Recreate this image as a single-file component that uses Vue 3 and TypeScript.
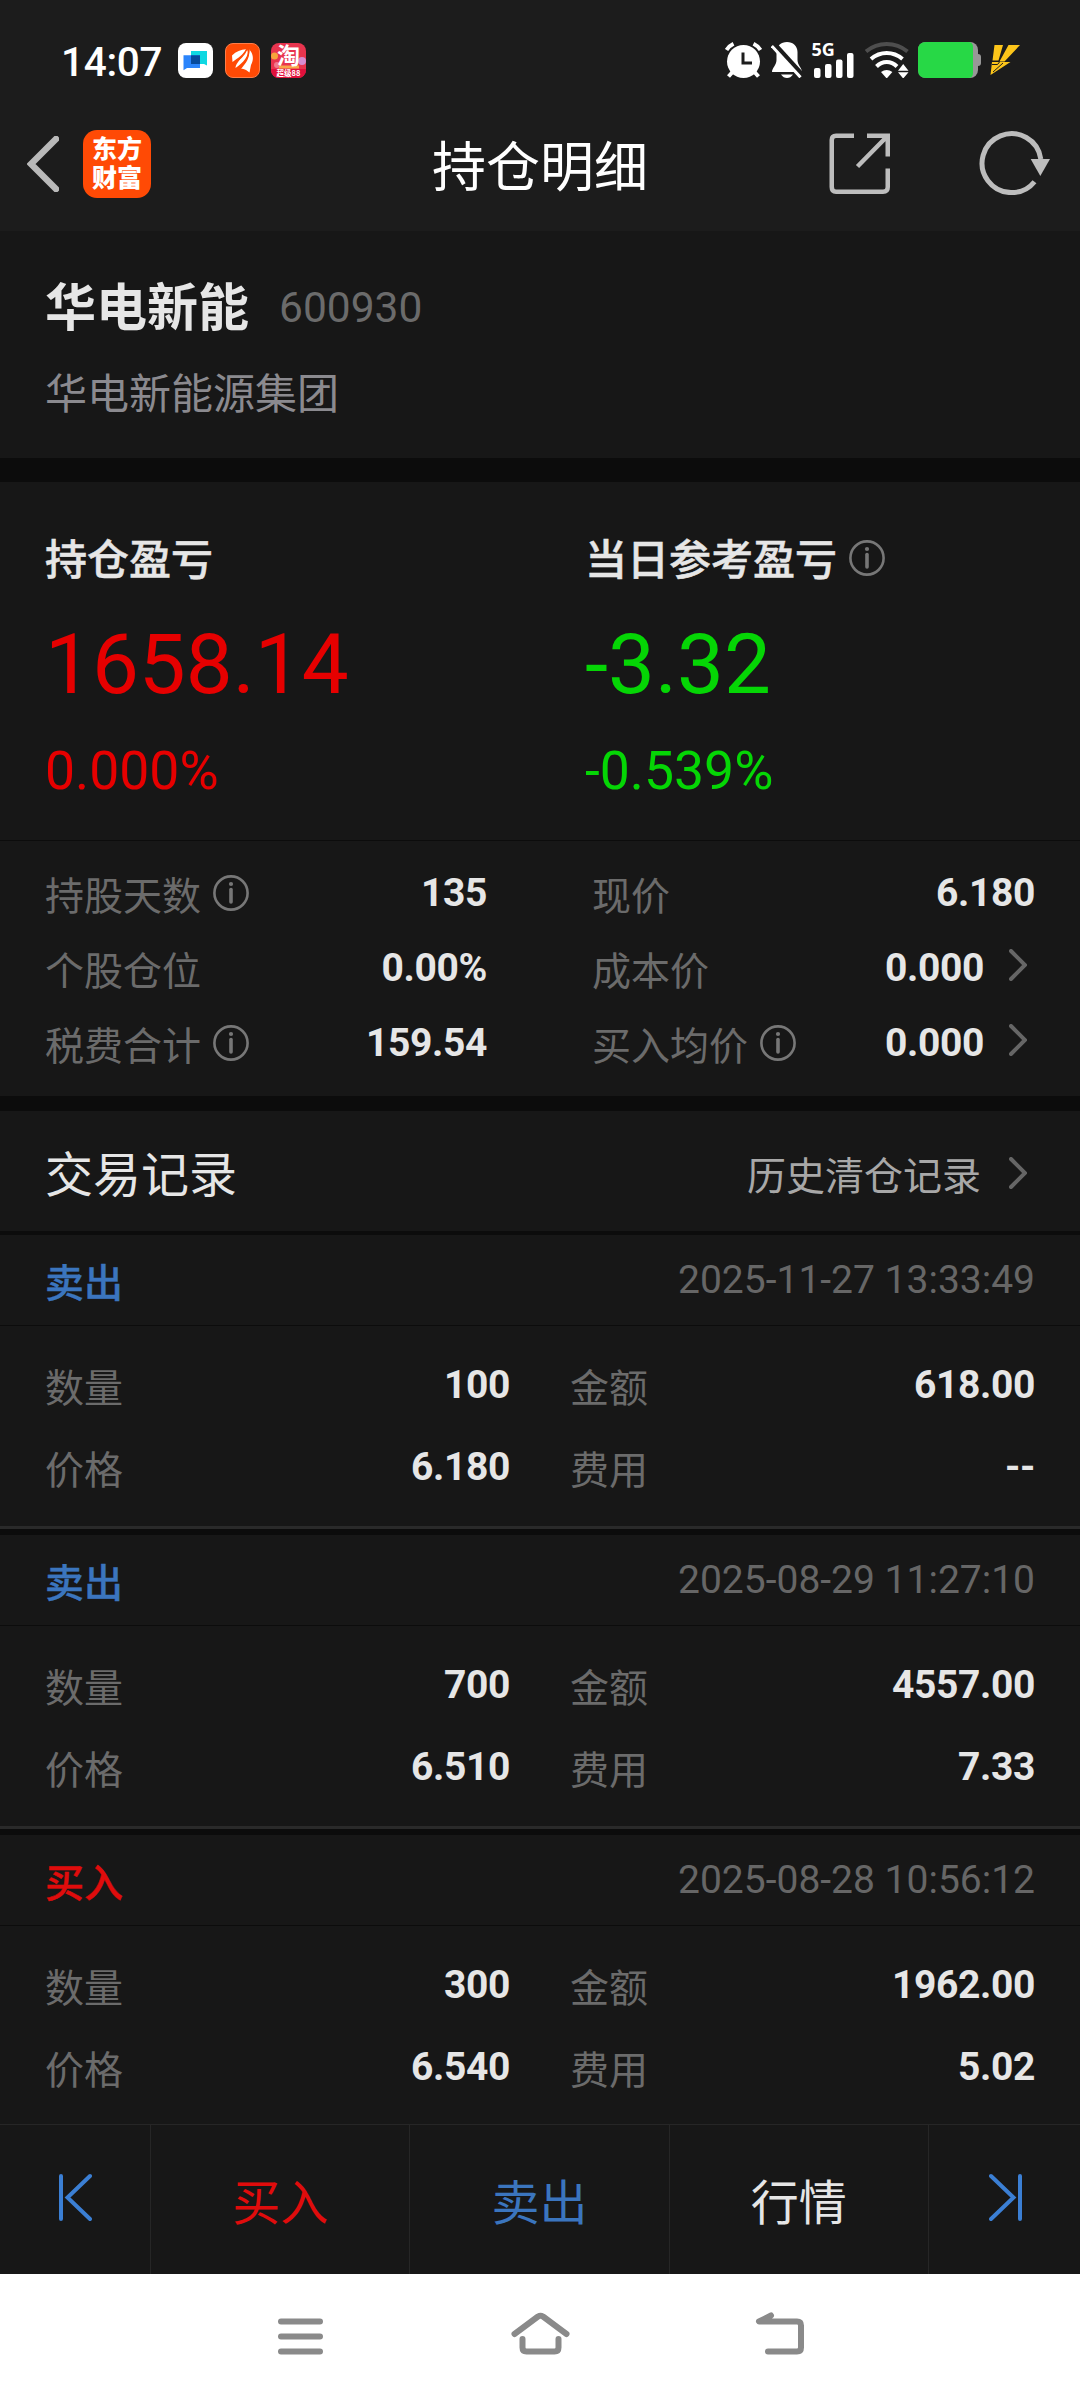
<script setup lang="ts">
interface Metric {
  label: string
  value: string
  info?: boolean
  link?: boolean
}

interface Trade {
  side: 'buy' | 'sell'
  time: string
  quantity: string
  amount: string
  price: string
  fee: string
}

const metrics: Metric[] = [
  { label: '持股天数', value: '135', info: true },
  { label: '现价', value: '6.180' },
  { label: '个股仓位', value: '0.00%' },
  { label: '成本价', value: '0.000', link: true },
  { label: '税费合计', value: '159.54', info: true },
  { label: '买入均价', value: '0.000', info: true, link: true },
]

const trades: Trade[] = [
  { side: 'sell', time: '2025-11-27 13:33:49', quantity: '100', amount: '618.00', price: '6.180', fee: '--' },
  { side: 'sell', time: '2025-08-29 11:27:10', quantity: '700', amount: '4557.00', price: '6.510', fee: '7.33' },
  { side: 'buy', time: '2025-08-28 10:56:12', quantity: '300', amount: '1962.00', price: '6.540', fee: '5.02' },
]

function cells(t: Trade): [string, string][] {
  return [
    ['数量', t.quantity],
    ['金额', t.amount],
    ['价格', t.price],
    ['费用', t.fee],
  ]
}
</script>

<template>
  <div class="screen">
    <header class="top">
      <div class="status">
        <span class="clock">14:07</span>
        <div class="apps">
          <svg width="35" height="35" viewBox="0 0 35 35">
            <rect width="35" height="35" rx="8" fill="#fff" />
            <path d="M13 8H29v14.500l-3-1.500H13z" fill="#0fd8e2" />
            <path d="M5.500 12.300H22V25H9l-3.500 2.300z" fill="#2a84fb" />
            <rect x="13" y="12.300" width="9" height="8.700" fill="#064a9c" />
          </svg>
          <svg width="35" height="35" viewBox="0 0 35 35">
            <rect x=".5" y=".5" width="34" height="34" rx="7.500" fill="#ff4a05" stroke="#ff7d48" />
            <path d="M7 12.500C11 8.500 16 6.500 21 6.300C18 12 13 15 7.500 19z" fill="#fff" />
            <path d="M10.500 25C10.500 20 18 14 22 6.500C25 12 18 20 10.500 25z" fill="#fff" />
            <path d="M16 26C21 20 25 15 24.300 6.500C28.500 11 29 17 26 22L24.500 29.500C22 28 19 25 16 26z" fill="#fff" />
            <path d="M8 21C15 16 19 13 21.800 6.500M13.500 26C19.500 20 24 15 24 7" stroke="#ff4a05" stroke-width="1.200" fill="none" />
          </svg>
          <svg class="shop" width="35" height="35" viewBox="0 0 35 35">
            <rect width="35" height="35" rx="8" fill="#e8344e" />
            <circle cx="3.500" cy="13" r="3.500" fill="#f6a43c" />
            <circle cx="31" cy="18" r="4" fill="#d78bd0" />
            <circle cx="6" cy="22" r="3" fill="#f07a8c" />
            <path d="M8 24h20" stroke="#f9a54a" stroke-width="3" />
            <path d="M0 26h35v1a8 8 0 0 1-8 8H8a8 8 0 0 1-8-8z" fill="#e0103c" />
            <text x="17.500" y="21" text-anchor="middle" font-size="23" class="tao">淘</text>
            <text x="17.500" y="33.300" text-anchor="middle" font-size="7.500" class="tao">超级88</text>
          </svg>
        </div>
        <div class="indicators">
          <svg width="37" height="36" viewBox="0 0 37 36">
            <g fill="none" stroke="#fff" stroke-width="4">
              <path d="M1.500 8Q4 4 8.500 1.800M35.500 8Q33 4 28.500 1.800M8 29.500 3.500 34.500M29 29.500l4.500 5" />
            </g>
            <circle cx="18.500" cy="19.500" r="16.500" fill="#fff" />
            <path d="M18 10.500V21h9" fill="none" stroke="#1c1c1c" stroke-width="3" />
          </svg>
          <svg class="bell" width="32" height="36" viewBox="0 0 32 36">
            <path d="M16 0C10 0 5.500 4 5.500 10V18C5.500 23 1 26 1 30H31C31 26 26.500 23 26.500 18V10C26.500 4 22 0 16 0z" fill="#fff" />
            <path d="M10 32.500h12q-2.500 3.500-6 3.500t-6-3.500z" fill="#fff" />
            <path d="M2.500 2 33 35.500" stroke="#1c1c1c" stroke-width="6" />
            <path d="M.8 4 29.500 35.300" stroke="#fff" stroke-width="3" />
          </svg>
          <svg class="signal" width="42" height="36" viewBox="0 0 42 36">
            <text x="-.5" y="13.600" class="net">5G</text>
            <g fill="#fff">
              <rect x="2" y="26" width="6.500" height="10" rx="2" />
              <rect x="13" y="22" width="6.500" height="14" rx="2" />
              <rect x="24" y="17.500" width="6.500" height="18.500" rx="2" />
              <rect x="35" y="11" width="6.500" height="25" rx="2" />
            </g>
          </svg>
          <svg class="wifi" width="44" height="36" viewBox="0 0 44 36">
            <g fill="none" stroke="#fff" stroke-width="4">
              <path d="M1 9.500Q10 2 21.700 2T42.500 9.500" stroke="#4e4e4e" />
              <path d="M6 17Q13 11 21.700 11T37.500 17" />
              <path d="M11.500 24.500Q16 20 21.700 20T32 24.500" />
            </g>
            <path d="M16 30Q21.700 26 27.400 30L21.700 36.500z" fill="#fff" />
            <path d="M33 28.700h10.500L38.200 22zM33 30.300h10.500L38.200 36.500z" fill="#fff" />
          </svg>
          <svg class="battery" width="63" height="36" viewBox="0 0 63 36">
            <rect width="60" height="36" rx="8" fill="#979797" />
            <path d="M60 12q3 0 3 3v6q0 3-3 3z" fill="#979797" />
            <path d="M8 0h42q5 0 5 5v26q0 5-5 5H8q-8 0-8-8V8q0-8 8-8z" fill="#27d846" />
          </svg>
          <svg class="bolt" width="30" height="30" viewBox="0 0 30 30">
            <path d="M4.500 0H13L8.500 15.500H2.500zM18.500 0H30L14.500 16.500H9.500zM2 17H20.500L.5 30z" fill="#fcc51a" />
            <path d="M2 19.500H7.500L9.500 17M13 18 3 27" stroke="#1c1c1c" stroke-width="1" fill="none" />
          </svg>
        </div>
      </div>

      <nav class="bar">
        <div class="bar-left">
          <svg width="32" height="56" viewBox="0 0 32 56" fill="none" stroke="#b9b9b9" stroke-width="6.500">
            <path d="M29 3 4 28 29 53" stroke-linecap="round" stroke-linejoin="miter" />
          </svg>
          <div class="logo"><span>东方</span><span>财富</span></div>
        </div>
        <h1 class="title">持仓明细</h1>
        <div class="bar-right">
          <svg width="62" height="62" viewBox="0 0 62 62" fill="none" stroke="#bdbdbd" stroke-width="4.500">
            <path d="M25 2.750H7Q2.750 2.750 2.750 7V54Q2.750 58.750 7 58.750H54Q58.750 58.750 58.750 54V35.500" />
            <path d="M38 2.750H58.750V23.500M57.500 4 28.500 33.500" />
          </svg>
          <svg class="refresh" width="72" height="66" viewBox="0 0 72 66">
            <path d="M55.500 52.700A29.500 29.500 0 1 1 61.800 30" fill="none" stroke="#bdbdbd" stroke-width="5" />
            <path d="M51.700 30H71L61.300 47z" fill="#bdbdbd" />
          </svg>
        </div>
      </nav>
    </header>

    <section class="stock">
      <div class="stock-line">
        <strong class="name">华电新能</strong>
        <span class="code">600930</span>
      </div>
      <div class="company">华电新能源集团</div>
    </section>

    <section class="profit">
      <div class="col up">
        <div class="caption"><span>持仓盈亏</span></div>
        <div class="big">1658.14</div>
        <div class="rate">0.000%</div>
      </div>
      <div class="col down">
        <div class="caption">
          <span>当日参考盈亏</span>
          <svg class="info" width="36" height="36" viewBox="0 0 36 36">
            <circle cx="18" cy="18" r="16.600" fill="none" stroke="#777" stroke-width="2.600" />
            <circle cx="18" cy="9" r="2.100" fill="#777" />
            <path d="M18 14.500V27" stroke="#777" stroke-width="3.600" stroke-linecap="round" />
          </svg>
        </div>
        <div class="big">-3.32</div>
        <div class="rate">-0.539%</div>
      </div>
    </section>

    <section class="metrics">
      <div v-for="m in metrics" :key="m.label" class="metric">
        <span class="label">{{ m.label }}</span>
        <svg v-if="m.info" class="info" width="36" height="36" viewBox="0 0 36 36">
          <circle cx="18" cy="18" r="16.600" fill="none" stroke="#777" stroke-width="2.600" />
          <circle cx="18" cy="9" r="2.100" fill="#777" />
          <path d="M18 14.500V27" stroke="#777" stroke-width="3.600" stroke-linecap="round" />
        </svg>
        <span class="value">{{ m.value }}</span>
        <svg v-if="m.link" class="chevron" width="18" height="32" viewBox="0 0 18 32">
          <path d="M2 2 16 16 2 30" />
        </svg>
      </div>
    </section>

    <section class="records">
      <div class="records-head">
        <h2>交易记录</h2>
        <span class="history">历史清仓记录</span>
        <svg class="chevron" width="18" height="32" viewBox="0 0 18 32">
          <path d="M2 2 16 16 2 30" />
        </svg>
      </div>
      <article v-for="t in trades" :key="t.time" class="trade">
        <div class="trade-head">
          <span :class="['side', t.side]">{{ t.side === 'buy' ? '买入' : '卖出' }}</span>
          <time>{{ t.time }}</time>
        </div>
        <div class="trade-body">
          <div v-for="[label, value] in cells(t)" :key="label" class="cell">
            <span class="label">{{ label }}</span>
            <span class="value">{{ value }}</span>
          </div>
        </div>
      </article>
    </section>

    <footer class="actions">
      <button class="edge">
        <svg width="34" height="50" viewBox="0 0 34 50"><path d="M3 3V46M32 3 9.500 24.500 32 46" /></svg>
      </button>
      <button class="buy">买入</button>
      <button class="sell">卖出</button>
      <button class="quote">行情</button>
      <button class="edge last">
        <svg width="34" height="50" viewBox="0 0 34 50"><path d="M31 3V46M2 3 24.500 24.500 2 46" /></svg>
      </button>
    </footer>

    <div class="system">
      <svg width="48" height="44" viewBox="0 0 48 44"><path d="M4 9.500H43M4 24.500H43M4 39.500H43" /></svg>
      <svg width="60" height="44" viewBox="0 0 60 44">
        <path d="M4.500 22 28 4.500Q30.500 3 33 4.500L56.500 22M12.500 27V35.500Q12.500 39.500 16.500 39.500H44.500Q48.500 39.500 48.500 35.500V27" />
      </svg>
      <svg width="50" height="44" viewBox="0 0 50 44">
        <path d="M16 3.500 4 9.500H42Q46 9.500 46 13.500V35.500Q46 39.500 42 39.500H13" />
      </svg>
    </div>
  </div>
</template>

<style>
body {
  margin: 0;
  background: #171717;
}
</style>

<style scoped>
.screen {
  width: 1080px;
  height: 2400px;
  display: flex;
  flex-direction: column;
  overflow: hidden;
  background: #171717;
  color: #e6e6e6;
  font-family: Roboto, "Noto Sans CJK SC", sans-serif;
}
svg {
  display: block;
  flex: none;
}
.top {
  height: 231px;
  background: #1c1c1c;
}
.status {
  height: 72px;
  padding: 24px 60px 0 61px;
  display: flex;
  align-items: center;
}
.clock {
  width: 117px;
  padding-top: 4px;
  font-size: 40.5px;
  line-height: 48px;
  letter-spacing: -0.3px;
  font-weight: 500;
  color: #fff;
}
.apps {
  display: flex;
  gap: 11.5px;
}
.shop {
  overflow: visible;
}
.tao {
  font-family: "Noto Sans CJK SC", sans-serif;
  font-weight: 700;
  fill: #fff;
}
.indicators {
  margin-left: auto;
  display: flex;
  align-items: center;
}
.bell {
  margin-left: 9px;
}
.signal {
  margin-left: 9px;
  overflow: visible;
}
.net {
  font: 700 18px "Noto Sans", sans-serif;
  fill: #fff;
}
.wifi {
  margin-left: 11px;
}
.battery {
  margin-left: 9px;
}
.bolt {
  margin-left: 9px;
}
.bar {
  height: 135px;
  padding: 0 27px;
  display: grid;
  grid-template-columns: 1fr auto 1fr;
  align-items: center;
}
.bar-left {
  display: flex;
  align-items: center;
  gap: 24px;
}
.logo {
  width: 68px;
  height: 68px;
  box-sizing: border-box;
  padding-top: 5px;
  border-radius: 14px;
  background: #ff4a05;
  color: #fff;
  display: flex;
  flex-direction: column;
  align-items: center;
  font-size: 25px;
  line-height: 29px;
  font-weight: 900;
}
.title {
  margin: 0;
  padding-top: 11px;
  font-size: 54px;
  line-height: 64px;
  font-weight: 400;
  color: #fff;
}
.bar-right {
  display: flex;
  align-items: center;
  justify-content: flex-end;
  gap: 88px;
  margin-right: 2px;
}
.refresh {
  margin-bottom: 4px;
}
.stock {
  height: 227px;
  box-sizing: border-box;
  padding: 48px 45px 0;
}
.stock-line {
  display: flex;
  align-items: center;
  gap: 30px;
  height: 60px;
}
.name {
  font-size: 51px;
  line-height: 60px;
  font-weight: 700;
}
.code {
  padding-bottom: 3px;
  font-size: 42.5px;
  line-height: 60px;
  color: #6b6b6b;
}
.company {
  margin-top: 30px;
  font-size: 42px;
  line-height: 52px;
  color: #8b8a8f;
}
.profit {
  height: 383px;
  box-sizing: border-box;
  border-top: 24px solid #0c0c0c;
  border-bottom: 1px solid #0c0c0c;
  padding: 54px 45px 0;
  display: grid;
  grid-template-columns: 540px 1fr;
}
.caption {
  height: 50px;
  display: flex;
  align-items: center;
  font-size: 42px;
  line-height: 50px;
  font-weight: 500;
  -webkit-text-stroke: 0.5px currentColor;
}
.caption .info {
  margin: 0 0 6px 12px;
}
.big {
  margin-top: 29px;
  font-size: 83.5px;
  line-height: 100px;
}
.rate {
  margin-top: 26px;
  font-size: 53.5px;
  line-height: 60px;
}
.up .big,
.up .rate {
  color: #e60000;
}
.down .big,
.down .rate {
  color: #05d605;
}
.metrics {
  height: 255px;
  box-sizing: border-box;
  padding: 14px 45px 0;
  display: grid;
  grid-template-columns: 442px 443px;
  grid-auto-rows: 75px;
  column-gap: 105px;
}
.metric {
  display: flex;
  align-items: center;
}
.label {
  padding-top: 8px;
  font-size: 39px;
  line-height: 50px;
  color: #6b6b6b;
}
.metric .info {
  margin-left: 12px;
}
.value {
  margin-left: auto;
  font-size: 39px;
  line-height: 50px;
  letter-spacing: -0.35px;
  font-weight: 700;
}
.chevron {
  margin: 0 8px 5px 25px;
  fill: none;
  stroke: #666;
  stroke-width: 4;
  stroke-linecap: round;
}
.records {
  height: 1028px;
  overflow: hidden;
}
.records-head {
  height: 139px;
  box-sizing: border-box;
  border-top: 15px solid #0c0c0c;
  border-bottom: 4px solid #0c0c0c;
  padding: 8px 45px 0;
  display: flex;
  align-items: center;
}
.records-head h2 {
  margin: 0;
  padding-top: 1px;
  font-size: 48px;
  line-height: 60px;
  font-weight: 400;
}
.history {
  margin-left: auto;
  padding-top: 4px;
  font-size: 39px;
  line-height: 50px;
  color: #a8a8a8;
}
.records-head .chevron {
  margin-left: 28px;
}
.trade {
  height: 300px;
  box-sizing: border-box;
  border-bottom: 6px solid #0c0c0c;
}
.trade-head {
  height: 91px;
  box-sizing: border-box;
  border-bottom: 1px solid #0c0c0c;
  padding: 0 45px;
  display: flex;
  align-items: center;
  justify-content: space-between;
}
.side {
  padding-top: 7px;
  font-size: 39px;
  line-height: 50px;
  font-weight: 500;
  -webkit-text-stroke: 0.4px currentColor;
}
.sell {
  color: #3b75be;
}
.buy {
  color: #e00c0c;
}
time {
  font-size: 39px;
  line-height: 50px;
  color: #666;
}
.trade-body {
  height: 203px;
  box-sizing: border-box;
  border-bottom: 3px solid #2a2a2a;
  padding: 18px 45px 0;
  display: grid;
  grid-template-columns: 465px 465px;
  grid-auto-rows: 82px;
  column-gap: 60px;
}
.cell {
  display: flex;
  align-items: center;
}
.actions {
  height: 150px;
  box-sizing: border-box;
  border-top: 1px solid #262626;
  display: flex;
}
.actions button {
  flex: 1;
  margin: 0;
  border: 0;
  border-right: 1px solid #262626;
  padding: 8px 0 0;
  background: none;
  font-family: inherit;
  font-size: 48px;
  line-height: 60px;
}
.actions .edge {
  flex: none;
  width: 151px;
  padding: 0 0 4px;
  display: flex;
  align-items: center;
  justify-content: center;
}
.actions .last {
  border-right: 0;
  padding-left: 3px;
}
.edge svg {
  fill: none;
  stroke: #3b7fd4;
  stroke-width: 4;
  stroke-linecap: round;
}
.quote {
  color: #e6e6e6;
}
.system {
  height: 126px;
  box-sizing: border-box;
  padding: 38px 0 0 2px;
  background: #fff;
  display: flex;
  justify-content: center;
  gap: 185px;
}
.system svg {
  fill: none;
  stroke: #8a8a8a;
  stroke-width: 6;
  stroke-linecap: round;
  stroke-linejoin: round;
}
</style>
